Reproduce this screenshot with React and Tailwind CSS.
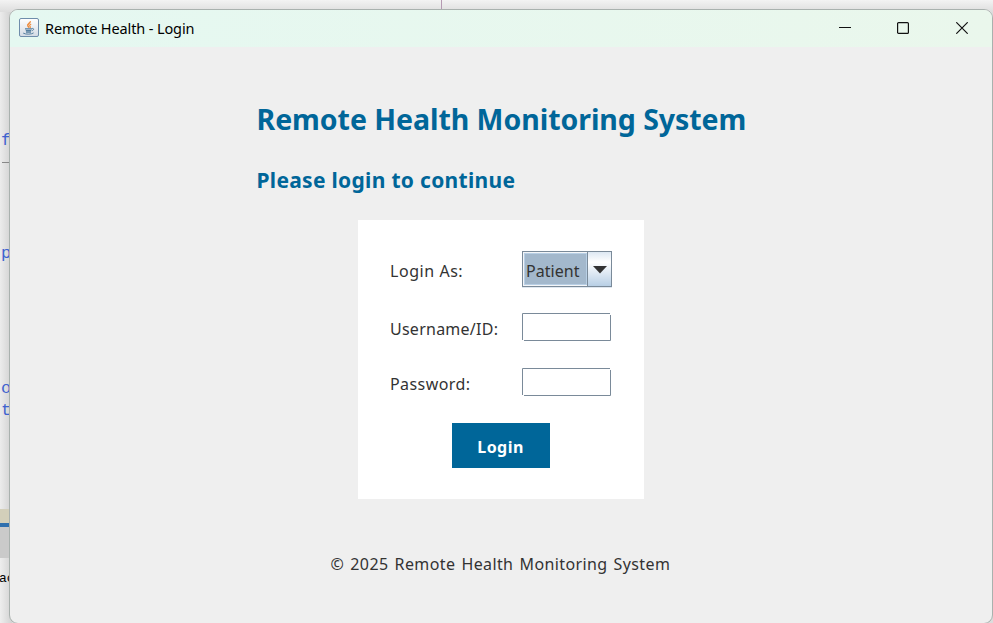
function JavaIcon() {
  return (
    <svg width="20" height="20" viewBox="0 0 20 20" className="block shrink-0">
      <defs>
        <linearGradient id="tile" x1="0" y1="0" x2="0" y2="1">
          <stop offset="0" stopColor="#ffffff" />
          <stop offset="1" stopColor="#d3dae4" />
        </linearGradient>
      </defs>
      <rect x="0.5" y="0.5" width="19" height="18" rx="1.5" fill="url(#tile)" stroke="#6f8dab" />
      <path d="M11.3 3.3c.6 1.7-3.6 2.5-2.5 4.5.3.7 1.2 1 1 2" fill="none" stroke="#ee8b3c" strokeWidth="1.5" />
      <path d="M12.2 6c-1.7.8-2 1.4-1 2.6.4.6.2 1-.2 1.4" fill="none" stroke="#ee8b3c" strokeWidth="1.1" />
      <path d="M6 10.8h7.2M6.8 12.6h5.4M7 14.2h5" fill="none" stroke="#557f9f" strokeWidth="1.2" />
      <path d="M13.2 10.4c2.2-.3 1.7 2-.4 2.4M4.2 15.1c2.5 1.6 8.8 1.2 10.4-.2" fill="none" stroke="#557f9f" strokeWidth="1" />
    </svg>
  );
}

function TitleBar() {
  return (
    <header className="flex h-[37px] shrink-0 items-center bg-linear-to-r from-[#e5f8f1] to-[#eaf7ec] pb-px pl-[9px]">
      <JavaIcon />
      <span className="ml-[6px] whitespace-nowrap font-['Noto_Sans',sans-serif] text-[14.5px] leading-5 tracking-[-0.12px] text-black">Remote Health - Login</span>
      <div className="ml-auto flex items-center pr-[24px]">
        <svg width="12" height="12" viewBox="0 0 12 12" className="mr-[46px]"><path d="M0 5.5h12" stroke="#111" /></svg>
        <svg width="12" height="12" viewBox="0 0 12 12" className="mr-[47px]"><rect x=".6" y=".6" width="10.8" height="10.8" rx="1" fill="none" stroke="#111" strokeWidth="1.2" /></svg>
        <svg width="12" height="12" viewBox="0 0 12 12"><path d="M.3.3l11.4 11.4M11.7.3L.3 11.7" stroke="#111" strokeWidth="1.2" /></svg>
      </div>
    </header>
  );
}

function Field() {
  return (
    <svg width="90" height="29" viewBox="0 0 90 29" className="block">
      <path d="M.5 27V.5H88M88.5 2V27.5H2" fill="none" stroke="#7a8a99" />
    </svg>
  );
}

function Select() {
  return (
    <div className="flex h-9 w-[90px] border border-[#7a8a99] bg-[#f3f5f8] shadow-[0_1px_0_#dfe7f0]">
      <div className="mb-px ml-px mt-px flex w-[63px] shrink-0 items-center border border-[#b8cfe5] bg-[#a3b8cc] pl-px pt-[3px]">
        <span className="whitespace-nowrap text-[16px] leading-6 tracking-[0.05px]">Patient</span>
      </div>
      <div className="flex flex-1 justify-center border-l border-[#7a8a99] bg-linear-to-b from-[#dde8f3] via-white via-30% to-[#b8cfe5] pt-[14px]">
        <svg width="14" height="8" viewBox="0 0 14 8"><path d="M0 0h14L7 7.5z" fill="#333" /></svg>
      </div>
    </div>
  );
}

function Backdrop() {
  return (
    <div className="absolute inset-0 overflow-hidden bg-[#dcdcdc] font-['Liberation_Mono',monospace] text-[17px] leading-5 text-[#3f63cf]">
      <div className="absolute left-0 top-0 h-full w-[12px] bg-linear-to-r from-[#ececec] to-[#d0d0d0]" />
      <div className="absolute left-0 top-0 h-[12px] w-full bg-linear-to-b from-[#f3f3f3] to-[#dddddd]" />
      <div className="absolute left-[441px] top-0 h-[10px] w-px bg-[#b59ab2]" />
      <span className="absolute left-[1px] top-[131px]">f</span>
      <div className="absolute left-[2px] top-[162px] h-px w-2 bg-[#888]" />
      <span className="absolute left-[1px] top-[244px]">p</span>
      <span className="absolute left-[1px] top-[379px]">o</span>
      <span className="absolute left-[1px] top-[401px]">t</span>
      <div className="absolute left-0 top-[509px] h-[14px] w-full bg-[#d3cfba]" />
      <div className="absolute left-0 top-[523px] h-1 w-full bg-[#3070ae]" />
      <div className="absolute left-0 top-[527px] h-[31px] w-full bg-[#cacaca]" />
      <div className="absolute left-0 top-[558px] h-[65px] w-[12px] bg-linear-to-r from-[#eeeeee] to-[#d2d2d2]" />
      <span className="absolute left-[-1px] top-[569px] text-[13px] text-black">ac</span>
    </div>
  );
}

export default function App() {
  return (
    <div className="relative h-[623px] w-[993px] overflow-hidden font-['Noto_Sans',sans-serif] text-[#333]">
      <Backdrop />
      <div className="relative ml-[9px] mt-[9px] flex h-[615px] w-[984px] flex-col overflow-hidden rounded-[9px] border border-[#a9b1ae] bg-[#efefef]">
        <TitleBar />
        <main className="flex flex-col items-center pt-[52px]">
          <div className="w-[489px] text-[#006699]">
            <h1 className="whitespace-nowrap text-[28.5px] font-bold leading-10 tracking-[-0.05px]">Remote Health Monitoring System</h1>
            <h2 className="mt-[25px] whitespace-nowrap text-[21px] font-bold leading-8 tracking-[0.3px]">Please login to continue</h2>
          </div>
          <form className="mt-[24px] flex h-[279px] w-[286px] flex-col items-center bg-white pt-[31px] text-[16px] leading-6">
            <div className="grid w-[222px] grid-cols-[132px_90px]">
              <span className="mt-[8px] whitespace-nowrap tracking-[0.55px]">Login As:</span>
              <Select />
              <span className="mt-[30px] whitespace-nowrap tracking-[0.25px]">Username/ID:</span>
              <div className="mt-[26px]"><Field /></div>
              <span className="mt-[30px] whitespace-nowrap tracking-[0.43px]">Password:</span>
              <div className="mt-[26px]"><Field /></div>
            </div>
            <button type="button" className="mt-[26px] flex h-[45px] w-[98px] items-center justify-center bg-[#006699] pr-px pt-[2px] font-bold tracking-[0.45px] text-white">Login</button>
          </form>
          <footer className="mt-[53px] w-[341px] whitespace-nowrap text-[16px] leading-6 tracking-[0.38px] [word-spacing:1.6px]">© 2025 Remote Health Monitoring System</footer>
        </main>
      </div>
    </div>
  );
}
